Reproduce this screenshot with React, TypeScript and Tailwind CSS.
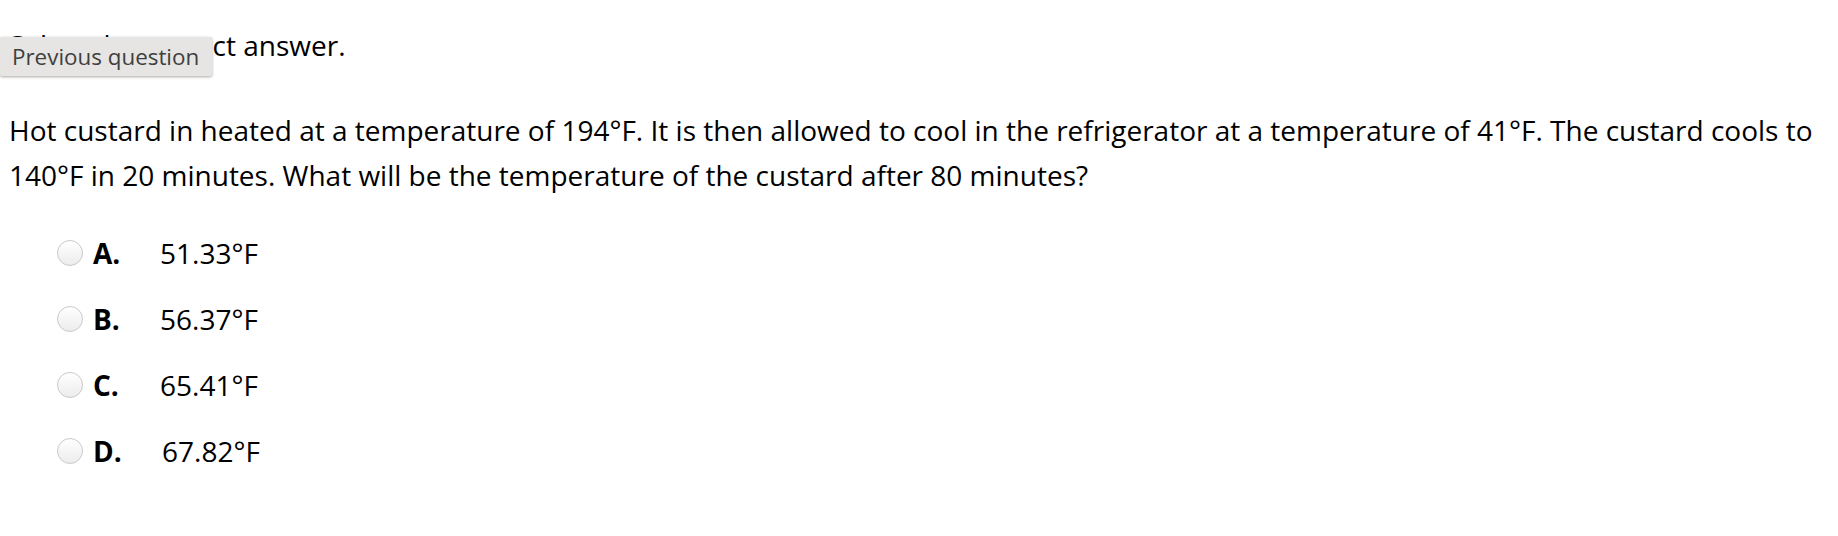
import React from "react";

const options = [
  { letter: "A.", value: "51.33°F", extra: "" },
  { letter: "B.", value: "56.37°F", extra: "" },
  { letter: "C.", value: "65.41°F", extra: "" },
  { letter: "D.", value: "67.82°F", extra: "pl-[2px]" },
];

export default function App() {
  return (
    <div
      className="w-[1838px] h-[536px] bg-white text-black overflow-hidden"
      style={{ fontFamily: '"Open Sans", "Noto Sans", sans-serif' }}
    >
      <div className="relative pt-[25px] pl-[9px] text-[28px] leading-[40px]">
        <div>Select the correct answer.</div>
        <div className="absolute left-0 top-[37px] w-[212px] h-[39px] bg-[#e6e5e4] rounded-[2px] shadow-[0_1px_3px_rgba(0,0,0,0.35)] text-[#3f3f3f] text-[22.4px] leading-[39px] pl-[12px]">
          Previous question
        </div>
      </div>

      <p className="mt-[43px] pl-[9px] pr-[4px] text-[28px] leading-[45px]">
        Hot custard in heated at a temperature of 194°F. It is then allowed to
        cool in the refrigerator at a temperature of 41°F. The custard cools to
        140°F in 20 minutes. What will be the temperature of the custard after
        80 minutes?
      </p>

      <div className="mt-[37px] pl-[57px] flex flex-col gap-[30px]">
        {options.map((o) => (
          <div key={o.letter} className="flex items-center h-[36px]">
            <div className="w-[26px] h-[26px] rounded-full border border-[#c9c9c9] bg-gradient-to-b from-white to-[#ececec] shadow-[inset_0_1px_1px_rgba(255,255,255,0.9)]" />
            <span className="ml-[10px] w-[67px] font-bold text-[28px] leading-[36px]">
              {o.letter}
            </span>
            <span className={`text-[28px] leading-[36px] ${o.extra}`}>
              {o.value}
            </span>
          </div>
        ))}
      </div>
    </div>
  );
}
